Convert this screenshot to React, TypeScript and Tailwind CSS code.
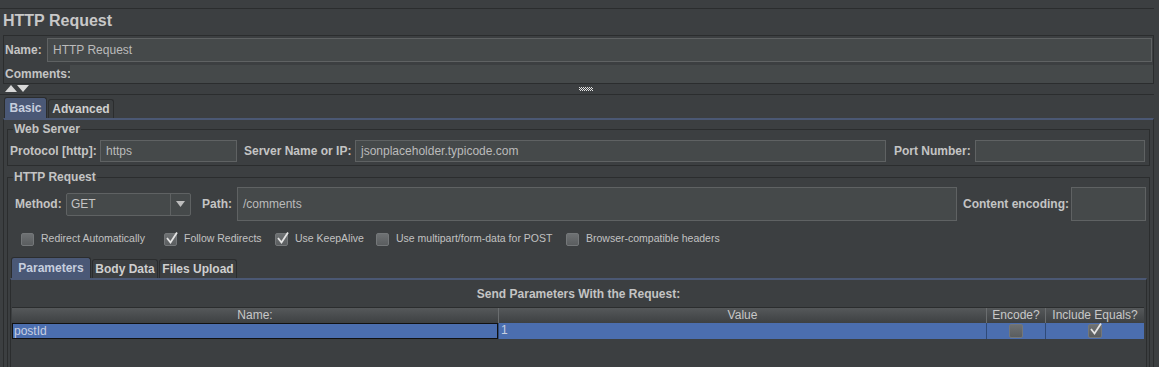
import React from "react";

const font = { fontFamily: '"Liberation Sans", Arial, sans-serif' };

function Field({ w, h = 22, value = "" }: { w: string; h?: number; value?: string }) {
  return (
    <div
      className={`${w} shrink-0 flex items-center border border-[#5f6263] bg-[#45494a] px-[5px] text-[12px] font-normal text-[#bbbbbb]`}
      style={{ height: h }}
    >
      {value}
    </div>
  );
}

function Check({ checked, size = 13 }: { checked?: boolean; size?: number }) {
  return (
    <div
      className="shrink-0 relative rounded-[2px] border border-[#747779] bg-gradient-to-b from-[#6e7173] to-[#5a5d5f]"
      style={{ width: size, height: size }}
    >
      {checked && (
        <svg viewBox="0 0 14 14" className="absolute left-[0px] top-[-3px] w-[14px] h-[14px]">
          <path d="M2 7 L5.5 11.5 L12 1.5" fill="none" stroke="#e4e4e4" strokeWidth="1.8" />
        </svg>
      )}
    </div>
  );
}

function CheckItem({ label, checked, w }: { label: string; checked?: boolean; w: string }) {
  return (
    <div className={`${w} shrink-0 flex items-center gap-[7px]`}>
      <Check checked={checked} />
      <span className="text-[10.5px] text-[#c2c2c2] whitespace-nowrap">{label}</span>
    </div>
  );
}

function Tab({ label, active, w }: { label: string; active?: boolean; w: string }) {
  return (
    <div
      className={`${w} flex items-center justify-center rounded-t-[3px] border border-b-0 border-[#2b2d2e] text-[12px] font-bold ${
        active ? "h-[21px] bg-[#4a5876] text-[#c6cede]" : "h-[19px] bg-[#3c3f41] text-[#cfcfcf]"
      }`}
    >
      {label}
    </div>
  );
}

export default function App() {
  return (
    <div className="w-[1159px] h-[367px] overflow-hidden bg-[#3c3f41] text-[#bbbbbb]" style={font}>
      {/* header */}
      <div className="pt-[8px]">
        <div className="w-[1154px] border-t border-[#2b2d2e] h-[27px] pl-[3px] pt-[2px] text-[16px] font-bold leading-[20px] text-[#c8c8c8]">
          HTTP Request
        </div>
      </div>

      {/* name / comments */}
      <div className="ml-[3px] w-[1151px] border border-[#2b2d2e]">
        <div className="flex items-center h-[26px] pt-[2px]">
          <span className="w-[43px] pl-[1px] text-[12px] font-bold text-[#c4c4c4]">Name:</span>
          <Field w="w-[1105px]" h={24} value="HTTP Request" />
        </div>
        <div className="flex items-center h-[21px]">
          <span className="w-[66px] pl-[1px] pt-[3px] text-[12px] font-bold text-[#c4c4c4]">Comments:</span>
          <div className="flex-1 h-[18px] mt-[3px] bg-[#45494a]" />
        </div>
      </div>

      {/* splitter */}
      <div className="relative h-[11px] w-[1154px] border-b border-[#2b2d2e]">
        <svg className="absolute left-[5px] top-[1px]" width="26" height="7" viewBox="0 0 26 7">
          <path d="M0 7 L6 0 L12 7 Z" fill="#d8d8d8" />
          <path d="M12 0 L24 0 L18 7 Z" fill="#d8d8d8" />
        </svg>
        <svg className="absolute left-[579px] top-[3px]" width="15" height="5" viewBox="0 0 15 5">
          {[0, 1, 2, 3, 4, 5, 6].map((i) => (
            <g key={i}>
              <rect x={i * 2} y={0} width="1" height="1" fill="#e0e0e0" />
              <rect x={i * 2 + 1} y={1} width="1" height="1" fill="#e0e0e0" />
              <rect x={i * 2} y={2} width="1" height="1" fill="#e0e0e0" />
              <rect x={i * 2 + 1} y={3} width="1" height="1" fill="#e0e0e0" />
            </g>
          ))}
        </svg>
      </div>

      {/* Basic / Advanced tabs */}
      <div className="ml-[4px] mt-[2px] flex items-end gap-[1px]">
        <Tab label="Basic" active w="w-[43px]" />
        <Tab label="Advanced" w="w-[66px]" />
      </div>
      <div className="ml-[3px] w-[1151px] h-[365px] border-t-2 border-[#4b5874] border-x border-x-[#2b2d2e]">
        {/* Web Server */}
        <fieldset className="ml-[3px] mt-[2px] w-[1143px] border border-[#2b2d2e] pb-[3px]">
          <legend className="ml-[5px] px-[1px] text-[12px] font-bold leading-[14px] text-[#c4c4c4]">Web Server</legend>
          <div className="flex items-center pl-[2px] pt-[4px] text-[12px] font-bold text-[#c4c4c4]">
            <span className="w-[90px]">Protocol [http]:</span>
            <Field w="w-[137px]" value="https" />
            <span className="ml-[7px] w-[111px]">Server Name or IP:</span>
            <Field w="w-[531px]" value="jsonplaceholder.typicode.com" />
            <span className="ml-[8px] w-[81px]">Port Number:</span>
            <Field w="w-[170px]" />
          </div>
        </fieldset>

        {/* HTTP Request */}
        <fieldset className="ml-[3px] mt-[4px] w-[1143px] h-[220px] border border-[#2b2d2e]">
          <legend className="ml-[5px] px-[1px] text-[12px] font-bold leading-[14px] text-[#c4c4c4]">HTTP Request</legend>
          <div className="flex items-center pl-[7px] pt-[3px] text-[12px] font-bold text-[#c4c4c4]">
            <span className="w-[51px]">Method:</span>
            <div className="w-[125px] h-[23px] shrink-0 flex items-center rounded-[2px] border border-[#5f6263] bg-[#45494a]">
              <span className="flex-1 pl-[4px] font-normal text-[#c4c4c4]">GET</span>
              <div className="w-[20px] h-full flex items-center justify-center border-l border-[#5f6263]">
                <svg width="9" height="6" viewBox="0 0 9 6">
                  <path d="M0 0 L9 0 L4.5 6 Z" fill="#bdbdbd" />
                </svg>
              </div>
            </div>
            <span className="ml-[11px] w-[35px]">Path:</span>
            <Field w="w-[720px]" h={34} value="/comments" />
            <span className="ml-[6px] w-[108px]">Content encoding:</span>
            <Field w="w-[75px]" h={34} />
          </div>

          <div className="mt-[9px] ml-[13px] h-[18px] flex items-center">
            <CheckItem w="w-[143px]" label="Redirect Automatically" />
            <CheckItem w="w-[111px]" label="Follow Redirects" checked />
            <CheckItem w="w-[101px]" label="Use KeepAlive" checked />
            <CheckItem w="w-[190px]" label="Use multipart/form-data for POST" />
            <CheckItem w="w-[170px]" label="Browser-compatible headers" />
          </div>

          {/* Parameters tabs */}
          <div className="ml-[3px] mt-[9px] flex items-end gap-[1px]">
            <Tab label="Parameters" active w="w-[80px]" />
            <Tab label="Body Data" w="w-[66px]" />
            <Tab label="Files Upload" w="w-[78px]" />
          </div>
          <div className="ml-[2px] w-[1137px] h-[120px] border-t-2 border-[#4b5874] border-x border-x-[#2b2d2e]">
            <div className="h-[27px] flex items-center justify-center text-[12px] font-bold text-[#c4c4c4]">
              Send Parameters With the Request:
            </div>
            <div className="ml-[1px] w-[1132px] text-[12px]">
              <div className="flex h-[16px] border-t border-[#2b2d2e] bg-gradient-to-b from-[#55585a] to-[#3e4143] text-[#c8c8c8] leading-[15px]">
                <div className="w-[486px] text-center">Name:</div>
                <div className="w-[488px] border-l border-[#6a6d6f] text-center">Value</div>
                <div className="w-[59px] border-l border-[#6a6d6f] text-center">Encode?</div>
                <div className="w-[99px] border-l border-[#6a6d6f] text-center">Include Equals?</div>
              </div>
              <div className="flex h-[16px] bg-[#4b6eaf] text-[#c8cfe0] leading-[14px]">
                <div className="w-[486px] border border-[#111111] pl-[1px]">postId</div>
                <div className="w-[488px] border-l border-[#2f4a78] pl-[2px]">1</div>
                <div className="w-[59px] border-l border-[#2f4a78] flex items-center justify-center">
                  <Check size={14} />
                </div>
                <div className="w-[99px] border-l border-[#2f4a78] flex items-center justify-center">
                  <Check checked size={14} />
                </div>
              </div>
            </div>
          </div>
        </fieldset>
      </div>
    </div>
  );
}
